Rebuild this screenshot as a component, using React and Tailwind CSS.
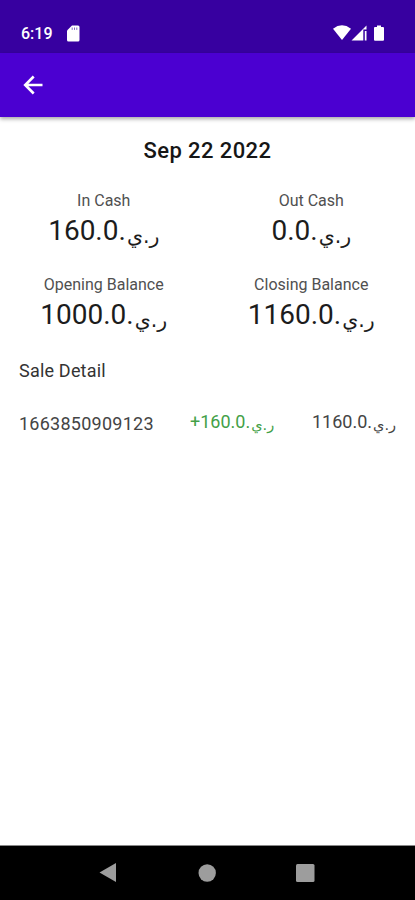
function Money({ value, unitClass }) {
  return (
    <span dir="ltr" className="whitespace-nowrap">
      {value}.
      <bdi dir="rtl" className={unitClass}>ر.ي</bdi>
    </span>
  );
}

function Stat({ label, value }) {
  return (
    <div className="flex w-1/2 flex-col items-center">
      <div className="h-5 text-[16px] leading-5 text-[#505050]">{label}</div>
      <div className="h-10 text-[28px] leading-10 text-[#1c1c1c]">
        <Money value={value} unitClass="ml-px align-[-3px] font-['DejaVu_Sans'] text-[20.5px] leading-none" />
      </div>
    </div>
  );
}

export default function App() {
  return (
    <div className="flex h-[900px] w-[415px] flex-col overflow-hidden bg-white font-[Roboto,'DejaVu_Sans',sans-serif]">
      <div className="flex h-[53px] shrink-0 items-start bg-[#3700a0] pt-[24px] pl-[21px] text-white">
        <span className="w-[45px] text-[16px] leading-5 font-medium">6:19</span>
        <svg className="mt-px" width="14" height="17" viewBox="0 0 14 17">
          <path fill="white" d="M6 0.5H12a1.5 1.5 0 0 1 1.5 1.5V15a1.5 1.5 0 0 1-1.5 1.5H2.500A1.500 1.500 0 0 1 1 15V5.500Z" />
          <path d="M6.2 2.500v2.400M8.500 2.500v2.400M10.800 2.500v2.400" stroke="#3700a0" strokeWidth="1" opacity=".6" />
        </svg>
        <svg className="mt-px mr-[30px] ml-auto" width="52" height="17" viewBox="0 0 52 17">
          <path fill="white" d="M0 3.700Q9-3 18 3.700L9 15Z" />
          <path fill="white" d="M18.500 15.500L33.500 0.500V4.500H30.300V15.500ZM31.800 6H33.500V15.500H31.800Z" />
          <path fill="white" d="M44 0.500h4V2h2q1 0 1 1V14.700q0 1-1 1H42q-1 0-1-1V3q0-1 1-1h2Z" />
        </svg>
      </div>
      <header className="relative flex h-[64px] shrink-0 items-center bg-[#4b00d1] pl-[23px] shadow-[0_2px_4px_rgba(0,0,0,0.35)]">
        <svg width="20" height="20" viewBox="0 0 20 20" fill="none" stroke="white" strokeWidth="2.6">
          <path d="M10.700 1.500L2.200 10L10.700 18.500M2.200 10H19.500" />
        </svg>
      </header>
      <main className="flex flex-1 flex-col">
        <h1 className="mt-[20px] h-7 text-center text-[22px] leading-7 font-medium tracking-[0.4px] text-[#161616]">Sep 22 2022</h1>
        <section className="mt-[26px] flex h-[84px]">
          <Stat label="In Cash" value="160.0" />
          <Stat label="Out Cash" value="0.0" />
        </section>
        <section className="flex h-[84px]">
          <Stat label="Opening Balance" value="1000.0" />
          <Stat label="Closing Balance" value="1160.0" />
        </section>
        <h2 className="h-6 pl-[19px] text-[18px] leading-6 tracking-[0.2px] text-[#333]">Sale Detail</h2>
        <div className="mt-[27px] flex h-7 items-start pl-[19px] text-[18px] leading-6 text-[#444]">
          <span className="mt-[2px] w-[171px] tracking-[0.25px]">1663850909123</span>
          <div className="w-[122px] text-[#43a047]">
            <Money value="+160.0" unitClass="ml-px align-[-2px] font-['DejaVu_Sans'] text-[14.5px] leading-none" />
          </div>
          <Money value="1160.0" unitClass="ml-px align-[-2px] font-['DejaVu_Sans'] text-[14.5px] leading-none" />
        </div>
      </main>
      <nav className="flex h-[55px] shrink-0 items-center justify-center border-t border-[#888] bg-black pr-px">
        <svg width="218" height="20" viewBox="0 0 218 20" fill="#9d9d9d">
          <path d="M1.500 9.500L18 0V19Z" />
          <circle cx="109.200" cy="10" r="8.700" />
          <rect x="198" y="1" width="18.500" height="18" rx="1.500" />
        </svg>
      </nav>
    </div>
  );
}
